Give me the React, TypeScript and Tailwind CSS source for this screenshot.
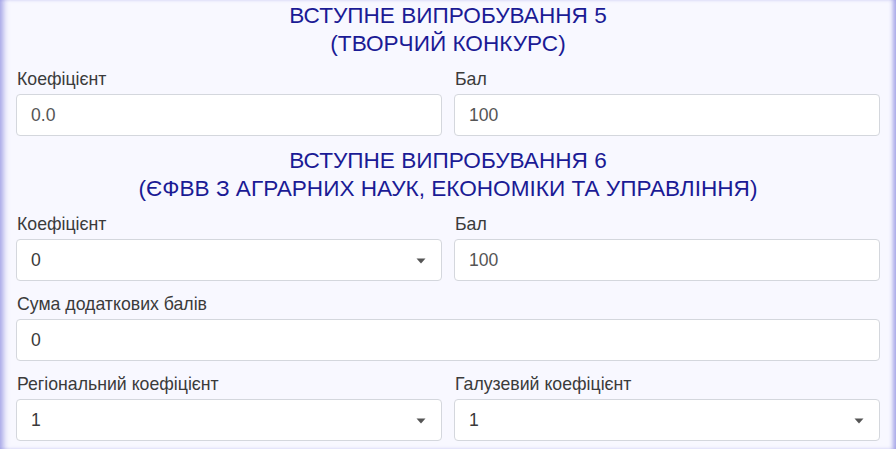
import React from "react";

const font = { fontFamily: '"Liberation Sans", Arial, sans-serif' };

function Heading({ l1, l2 }: { l1: string; l2: string }) {
  return (
    <div className="text-center text-[22.6px] leading-[28px] text-[#1b1b95] mb-[9px]">
      <div>{l1}</div>
      <div>{l2}</div>
    </div>
  );
}

function Label({ children }: { children: React.ReactNode }) {
  return <div className="text-[17.7px] leading-[24px] text-[#3b3b3b] pl-px mb-[3px]">{children}</div>;
}

function Field({ label, value, select, dark }: { label: string; value: string; select?: boolean; dark?: boolean }) {
  return (
    <div className="flex-1 min-w-0">
      <Label>{label}</Label>
      <div className="relative h-[42px] bg-white border border-[#d4d7dd] rounded-[4px] flex items-center pl-[14px]">
        <span className={`text-[17.6px] ${dark ? "text-[#3a3a3a]" : "text-[#555]"}`}>{value}</span>
        {select && (
          <svg className="absolute right-[15px] top-[18px]" width="10" height="6" viewBox="0 0 10 6">
            <path d="M0.5 0.5 L9.5 0.5 L5 5.5 Z" fill="#555" />
          </svg>
        )}
      </div>
    </div>
  );
}

export default function App() {
  return (
    <div
      style={font}
      className="w-[896px] h-[449px] overflow-hidden bg-[#f8f8ff] px-4 pt-[2px] shadow-[inset_7px_0_6px_-4px_rgba(110,110,215,0.65),inset_-5px_0_4px_-2px_rgba(110,110,215,0.6)]"
    >
      <Heading l1="ВСТУПНЕ ВИПРОБУВАННЯ 5" l2="(ТВОРЧИЙ КОНКУРС)" />
      <div className="flex gap-3 mb-[11px]">
        <Field label="Коефіцієнт" value="0.0" />
        <Field label="Бал" value="100" />
      </div>
      <Heading l1="ВСТУПНЕ ВИПРОБУВАННЯ 6" l2="(ЄФВВ З АГРАРНИХ НАУК, ЕКОНОМІКИ ТА УПРАВЛІННЯ)" />
      <div className="flex gap-3 mb-[11px]">
        <Field label="Коефіцієнт" value="0" select dark />
        <Field label="Бал" value="100" />
      </div>
      <div className="flex mb-[11px]">
        <Field label="Сума додаткових балів" value="0" dark />
      </div>
      <div className="flex gap-3">
        <Field label="Регіональний коефіцієнт" value="1" select dark />
        <Field label="Галузевий коефіцієнт" value="1" select dark />
      </div>
    </div>
  );
}
